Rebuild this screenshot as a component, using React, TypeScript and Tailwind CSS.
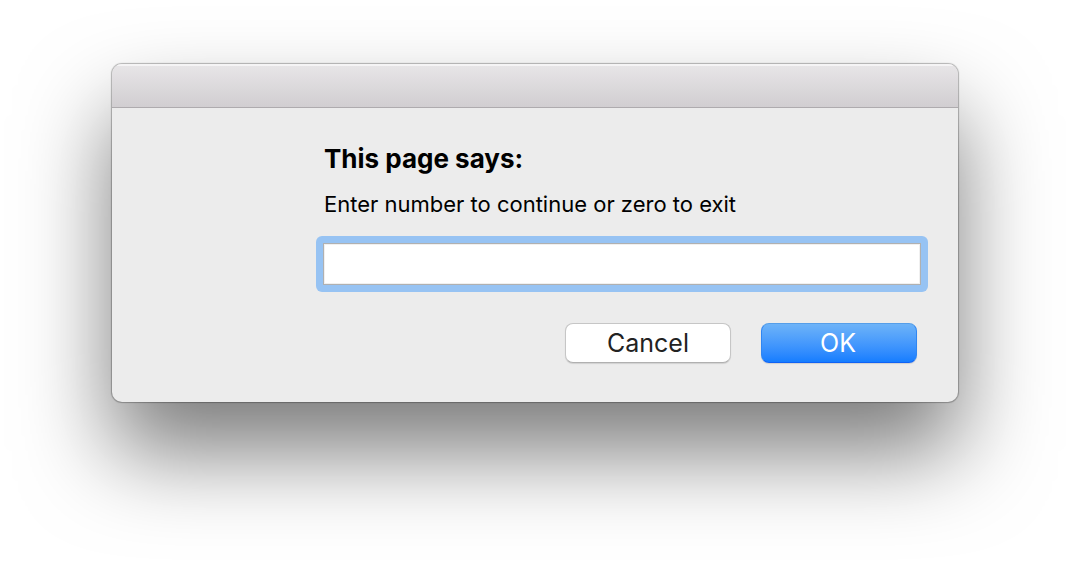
import { useState } from "react";

export default function App() {
  const [value, setValue] = useState("");
  return (
    <main className="min-h-screen overflow-hidden bg-white px-28 pt-16 font-[Inter,sans-serif] text-black">
      <section
        role="dialog"
        aria-labelledby="prompt-title"
        className="overflow-hidden rounded-[10px] bg-[#ececec] shadow-[0_0_1px_1px_rgba(0,0,0,0.27),0_50px_90px_0_rgba(0,0,0,0.52)]"
      >
        <div className="h-11 border-b border-[#aeabae] bg-linear-to-b from-[#e8e6e8] to-[#d1ced1] shadow-[inset_0_2px_0_#f5f4f5]" />
        <form
          className="flex flex-col pt-[35px] pr-[37px] pb-[39px] pl-[211px]"
          onSubmit={(e) => e.preventDefault()}
        >
          <h1 id="prompt-title" className="pl-px text-[26px] leading-8 font-bold">
            This page says:
          </h1>
          <label htmlFor="answer" className="mt-[13px] pl-px text-[22px] leading-8">
            Enter number to continue or zero to exit
          </label>
          <div className="mt-4 -mx-[7px] rounded-md bg-[#97c3f3] p-[7px]">
            <input
              id="answer"
              type="text"
              value={value}
              onChange={(e) => setValue(e.target.value)}
              className="block h-[42px] w-full border border-[#b0b0b0] bg-white px-2 text-[22px] shadow-[inset_0_0_0_1px_#f0f0f0] outline-none"
            />
          </div>
          <div className="mt-[31px] mr-1 flex justify-end gap-[30px] text-[25px] leading-9">
            <button
              type="button"
              className="h-10 w-[166px] rounded-lg border border-[#c6c6c6] border-b-[#b0b0b0] bg-white text-[#222] shadow-[0_1px_1px_rgba(0,0,0,0.12)]"
            >
              Cancel
            </button>
            <button
              type="submit"
              className="h-10 w-[156px] rounded-lg border border-[#2f86f2] border-t-[#559ee9] border-b-[#0f62f5] bg-linear-to-b from-[#6db3f8] to-[#147dff] pr-0.5 text-white shadow-[0_1px_1px_rgba(0,0,0,0.12)]"
            >
              OK
            </button>
          </div>
        </form>
      </section>
    </main>
  );
}
